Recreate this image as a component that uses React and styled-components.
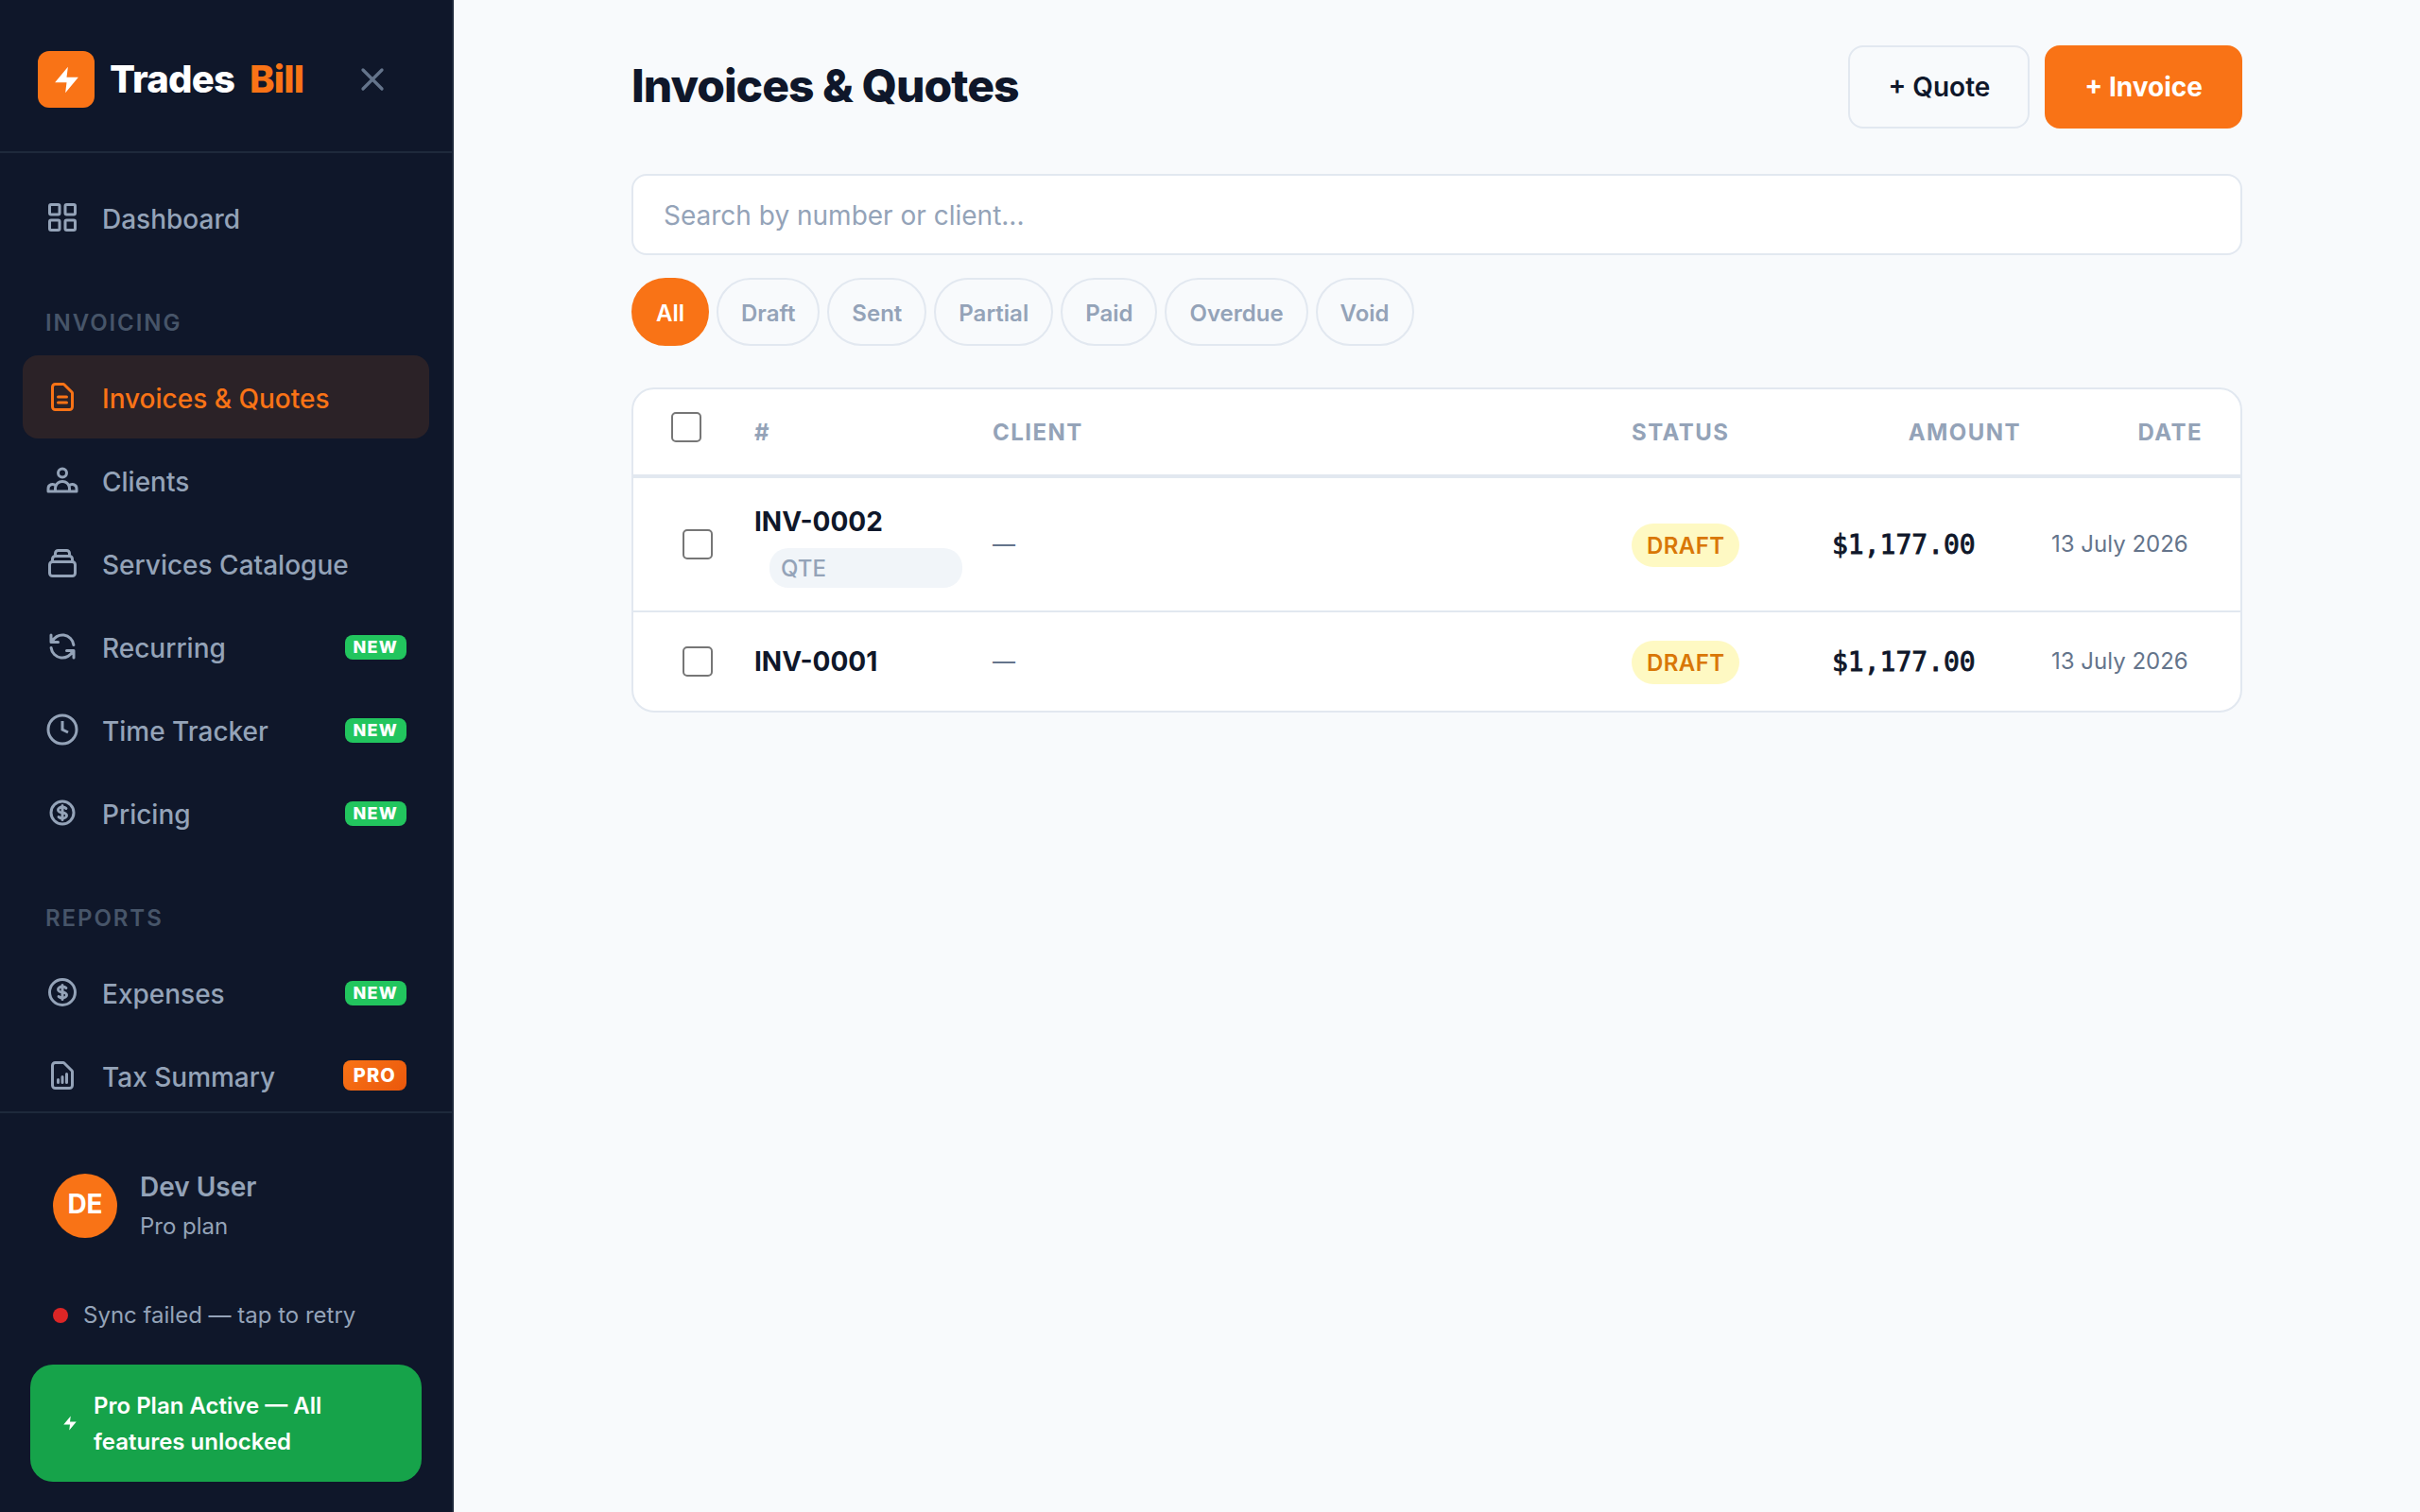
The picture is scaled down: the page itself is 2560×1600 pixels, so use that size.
import React from "react";
import styled, { createGlobalStyle, css } from "styled-components";

const GlobalStyle = createGlobalStyle`
    * {
        box-sizing: border-box;
    }

    body {
        margin: 0;
        background: #f8fafc;
        color: #0f172a;
        font-family: Inter, "Liberation Sans", sans-serif;
        font-size: 28px;
        overflow: hidden;
    }
`

const Layout = styled.div`
    display: flex;
    height: 100vh;
`

/* ---------- sidebar ---------- */

const Sidebar = styled.aside`
    display: flex;
    flex-direction: column;
    flex: none;
    width: 480px;
    background: #0f172a;
    border-right: 2px solid #1e293b;
`

const Brand = styled.div`
    display: flex;
    align-items: center;
    height: 162px;
    padding: 8px 64px 0 40px;
    border-bottom: 2px solid #1e293b;
`

const LogoBox = styled.div`
    display: grid;
    place-items: center;
    width: 60px;
    height: 60px;
    border-radius: 12px;
    background: #f97316;
`

const BrandName = styled.div`
    display: flex;
    gap: 16px;
    margin-left: 16px;
    color: #fff;
    font-size: 40px;
    font-weight: 800;
    letter-spacing: -0.8px;
    line-height: 48px;

    span {
        color: #f97316;
    }
`

const CloseButton = styled.button`
    display: grid;
    place-items: center;
    width: 40px;
    height: 40px;
    margin-left: auto;
    padding: 0;
    border: 0;
    background: none;
    color: #64748b;
`

const Nav = styled.nav`
    flex: 1;
    min-height: 0;
    padding: 24px 24px 0;
    overflow: hidden;
`

const NavLabel = styled.div`
    height: 102px;
    padding: 53px 24px 0;
    color: #475569;
    font-size: 24px;
    font-weight: 600;
    letter-spacing: 1.92px;
    line-height: 29px;
`

const NavItem = styled.a`
    display: flex;
    align-items: center;
    gap: 24px;
    height: 88px;
    padding: 0 24px;
    border-radius: 16px;
    color: #94a3b8;
    font-weight: 500;

    ${({ $active }) => $active && css`
        background: rgba(249, 115, 22, 0.12);
        color: #f97316;
    `}
`

const NavText = styled.span`
    flex: 1;
    padding-top: 3px;
    line-height: 34px;
    white-space: nowrap;
`

const Tag = styled.span`
    margin-top: 2px;
    padding: 0 9px;
    border-radius: 8px;
    background: #22c55e;
    color: #fff;
    font-size: 18px;
    font-weight: 800;
    letter-spacing: 1.2px;
    line-height: 26px;

    ${({ $pro }) => $pro && css`
        margin-top: 0;
        padding: 0 11px;
        background: linear-gradient(135deg, #f97316, #ea580c);
        font-size: 20px;
        line-height: 32px;
    `}
`

const SidebarFooter = styled.div`
    height: 424px;
    padding: 32px;
    border-top: 2px solid #1e293b;
`

const User = styled.div`
    display: flex;
    align-items: center;
    gap: 24px;
    height: 132px;
    padding: 0 24px;
`

const Avatar = styled.div`
    width: 68px;
    height: 68px;
    border-radius: 50%;
    background: #f97316;
    color: #fff;
    font-weight: 700;
    line-height: 64px;
    text-align: center;
`

const UserName = styled.div`
    color: #94a3b8;
    font-weight: 600;
    line-height: 42px;
`

const UserPlan = styled.div`
    color: #94a3b8;
    font-size: 24px;
    line-height: 41px;
`

const Sync = styled.div`
    display: flex;
    align-items: center;
    gap: 16px;
    height: 100px;
    margin-bottom: 2px;
    padding: 0 24px;
    color: #94a3b8;
    font-size: 24px;
    line-height: 30px;

    &::before {
        content: "";
        width: 16px;
        height: 16px;
        border-radius: 50%;
        background: #dc2626;
    }
`

const PlanBanner = styled.div`
    display: flex;
    align-items: center;
    gap: 16px;
    height: 124px;
    padding: 0 33px;
    border-radius: 24px;
    background: #16a34a;
    color: #fff;
    font-size: 24px;
    font-weight: 600;
    line-height: 38px;
`

const PlanText = styled.div`
    padding-top: 2px;
`

/* ---------- main area ---------- */

const Main = styled.main`
    flex: 1;
    padding: 48px 188px;
`

const PageHead = styled.header`
    display: flex;
    align-items: center;
    gap: 16px;
    height: 88px;
    margin-bottom: 48px;
`

const Title = styled.h1`
    flex: 1;
    margin: 0;
    padding-bottom: 2px;
    font-size: 48px;
    font-weight: 800;
    letter-spacing: -0.96px;
    line-height: 58px;
`

const Button = styled.button`
    height: 88px;
    padding: 0 40px;
    border: 2px solid #e2e8f0;
    border-radius: 16px;
    background: transparent;
    color: #0f172a;
    font: 600 28px Inter, sans-serif;

    ${({ $primary }) => $primary && css`
        border-color: #f97316;
        background: #f97316;
        color: #fff;
        font-weight: 700;
    `}
`

const Search = styled.input`
    display: block;
    width: 100%;
    height: 86px;
    margin-bottom: 24px;
    padding: 2px 32px 0;
    border: 2px solid #e2e8f0;
    border-radius: 16px;
    background: #fff;
    font: 400 28px Inter, sans-serif;

    &::placeholder {
        color: #94a3b8;
        opacity: 1;
    }
`

const Filters = styled.div`
    display: flex;
    gap: 8px;
    margin-bottom: 44px;
`

const Chip = styled.button`
    height: 72px;
    padding: 2px 24px 0;
    border: 2px solid #e2e8f0;
    border-radius: 40px;
    background: transparent;
    color: #94a3b8;
    font: 600 24px Inter, sans-serif;

    ${({ $active }) => $active && css`
        border-color: #f97316;
        background: #f97316;
        color: #fff;
    `}
`

const Card = styled.section`
    border: 2px solid #e2e8f0;
    border-radius: 24px;
    background: #fff;
    overflow: hidden;
`

const Row = styled.div`
    display: grid;
    grid-template-columns: 88px 252px 1fr 212px 200px 192px;
    align-items: center;
    height: ${({ $height }) => $height}px;
    padding: 0 40px;
    border-top: 2px solid #e2e8f0;
`

const HeadRow = styled(Row)`
    border-top: 0;
    border-bottom: 2px solid #e2e8f0;
    color: #94a3b8;
    font-size: 24px;
    font-weight: 700;
    letter-spacing: 1.44px;
`

const Cell = styled.div`
    text-align: ${({ $align }) => $align || "left"};
`

const Checkbox = styled.span`
    display: block;
    width: 32px;
    height: 32px;
    margin: ${({ $head }) => $head ? "0 0 10px" : "0 0 0 12px"};
    border: 2px solid #767676;
    border-radius: 5px;
`

const Number = styled.div`
    font-weight: 700;
    line-height: 44px;
`

const QuoteTag = styled.div`
    height: 42px;
    margin: 6px 32px 0 16px;
    padding: 0 12px;
    border-radius: 20px;
    background: #f1f5f9;
    color: #94a3b8;
    font-size: 24px;
    font-weight: 500;
    line-height: 43px;
`

const Client = styled.div`
    padding-bottom: 1px;
    color: #64748b;
    font-size: 24px;
`

const Status = styled.span`
    justify-self: start;
    height: 46px;
    margin-top: 2px;
    padding: 0 16px;
    border-radius: 24px;
    background: #fef9c3;
    color: #d97706;
    font-size: 24px;
    font-weight: 600;
    letter-spacing: 0.4px;
    line-height: 47px;
`

const Amount = styled.div`
    color: #0f172a;
    font: 400 28px "DejaVu Sans Mono", monospace;
    -webkit-text-stroke: 0.9px #0f172a;
`

const Day = styled.div`
    padding: 0 0 2px 32px;
    color: #64748b;
    font-size: 24px;
`

/* ---------- icons ---------- */

const IconSvg = styled.svg`
    flex: none;
    width: ${({ $size }) => $size || 36}px;
    height: ${({ $size }) => $size || 36}px;
    fill: none;
    stroke: currentColor;
    stroke-width: 2;
    stroke-linecap: ${({ $sharp }) => $sharp ? "butt" : "round"};
    stroke-linejoin: ${({ $sharp }) => $sharp ? "miter" : "round"};
`

const BoltSvg = styled.svg`
    flex: none;
    fill: #fff;
`

const DOLLAR = "M12 8c-1.657 0-3 .895-3 2s1.343 2 3 2 3 .895 3 2-1.343 2-3 2m0-8c1.11 0 2.08.402 2.599 1M12 8V7m0 1v8m0 0v1m0-1c-1.11 0-2.08-.402-2.599-1"
const PAGE = "m2 5H7a2 2 0 01-2-2V5a2 2 0 012-2h5.586a1 1 0 01.707.293l5.414 5.414a1 1 0 01.293.707V19a2 2 0 01-2 2z"

const icons = {
    dashboard: "M4 3h5a1 1 0 011 1v5a1 1 0 01-1 1H4a1 1 0 01-1-1V4a1 1 0 011-1zM15 3h5a1 1 0 011 1v5a1 1 0 01-1 1h-5a1 1 0 01-1-1V4a1 1 0 011-1zM4 14h5a1 1 0 011 1v5a1 1 0 01-1 1H4a1 1 0 01-1-1v-5a1 1 0 011-1zM15 14h5a1 1 0 011 1v5a1 1 0 01-1 1h-5a1 1 0 01-1-1v-5a1 1 0 011-1z",
    invoices: "M9 12h6m-6 4h6" + PAGE,
    clients: "M17 20h5v-2a3 3 0 00-5.356-1.857M17 20H7m10 0v-2c0-.656-.126-1.283-.356-1.857M7 20H2v-2a3 3 0 015.356-1.857M7 20v-2c0-.656.126-1.283.356-1.857m0 0a5.002 5.002 0 019.288 0M15 7a3 3 0 11-6 0 3 3 0 016 0z",
    services: "M19 11H5m14 0a2 2 0 012 2v6a2 2 0 01-2 2H5a2 2 0 01-2-2v-6a2 2 0 012-2m14 0V9a2 2 0 00-2-2M5 11V9a2 2 0 012-2m0 0V5a2 2 0 012-2h6a2 2 0 012 2v2M7 7h10",
    recurring: "M4 4v5h.582m15.356 2A8.001 8.001 0 004.582 9m0 0H9m11 11v-5h-.581m0 0a8.003 8.003 0 01-15.357-2m15.357 2H15",
    time: "M12 6v6l4 2M22 12a10 10 0 11-20 0 10 10 0 0120 0z",
    pricing: DOLLAR + "M20 12a8 8 0 11-16 0 8 8 0 0116 0z",
    expenses: DOLLAR + "M21 12a9 9 0 11-18 0 9 9 0 0118 0z",
    tax: "M9 17v-2m3 2v-4m3 4v-6m2 10H7a2 2 0 01-2-2V5a2 2 0 012-2h5.586a1 1 0 01.707.293l5.414 5.414a1 1 0 01.293.707V19a2 2 0 01-2 2z",
    close: "M18 6L6 18M6 6l12 12",
}

const Icon = ({ name, size }) => <IconSvg viewBox="0 0 24 24" $size={size} $sharp={name === "time"}>
    <path d={icons[name]} />
</IconSvg>

const Bolt = ({ size }) => <BoltSvg width={size} height={size} viewBox="0 0 24 24">
    <path d="M13 2L3 14h9l-1 8 10-12h-9l1-8z" />
</BoltSvg>

const invoicing = [
    { icon: "invoices", text: "Invoices & Quotes", active: true },
    { icon: "clients", text: "Clients" },
    { icon: "services", text: "Services Catalogue" },
    { icon: "recurring", text: "Recurring", tag: "NEW" },
    { icon: "time", text: "Time Tracker", tag: "NEW" },
    { icon: "pricing", text: "Pricing", tag: "NEW" },
]

const reports = [
    { icon: "expenses", text: "Expenses", tag: "NEW" },
    { icon: "tax", text: "Tax Summary", tag: "PRO" },
]

const filters = ["All", "Draft", "Sent", "Partial", "Paid", "Overdue", "Void"]

const rows = [
    { number: "INV-0002", quote: true, height: 142 },
    { number: "INV-0001", height: 106 },
]

const renderItem = ({ icon, text, tag, active }) => <NavItem key={text} $active={active}>
    <Icon name={icon} />
    <NavText>{text}</NavText>
    {tag && <Tag $pro={tag === "PRO"}>{tag}</Tag>}
</NavItem>

export default function App() {
    return <Layout>
        <GlobalStyle />
        <Sidebar>
            <Brand>
                <LogoBox><Bolt size={33} /></LogoBox>
                <BrandName>Trades<span>Bill</span></BrandName>
                <CloseButton aria-label="Close menu"><Icon name="close" size={40} /></CloseButton>
            </Brand>
            <Nav>
                {renderItem({ icon: "dashboard", text: "Dashboard" })}
                <NavLabel>INVOICING</NavLabel>
                {invoicing.map(renderItem)}
                <NavLabel>REPORTS</NavLabel>
                {reports.map(renderItem)}
            </Nav>
            <SidebarFooter>
                <User>
                    <Avatar>DE</Avatar>
                    <div>
                        <UserName>Dev User</UserName>
                        <UserPlan>Pro plan</UserPlan>
                    </div>
                </User>
                <Sync>Sync failed — tap to retry</Sync>
                <PlanBanner>
                    <Bolt size={18} />
                    <PlanText>Pro Plan Active — All features unlocked</PlanText>
                </PlanBanner>
            </SidebarFooter>
        </Sidebar>
        <Main>
            <PageHead>
                <Title>Invoices & Quotes</Title>
                <Button>+ Quote</Button>
                <Button $primary>+ Invoice</Button>
            </PageHead>
            <Search placeholder="Search by number or client..." />
            <Filters>
                {filters.map(f => <Chip key={f} $active={f === "All"}>{f}</Chip>)}
            </Filters>
            <Card>
                <HeadRow $height={92}>
                    <Checkbox $head />
                    <Cell>#</Cell>
                    <Cell>CLIENT</Cell>
                    <Cell>STATUS</Cell>
                    <Cell $align="right">AMOUNT</Cell>
                    <Cell $align="right">DATE</Cell>
                </HeadRow>
                {rows.map(r => <Row key={r.number} $height={r.height}>
                    <Checkbox />
                    <div>
                        <Number>{r.number}</Number>
                        {r.quote && <QuoteTag>QTE</QuoteTag>}
                    </div>
                    <Client>—</Client>
                    <Status>DRAFT</Status>
                    <Amount>$1,177.00</Amount>
                    <Day>13 July 2026</Day>
                </Row>)}
            </Card>
        </Main>
    </Layout>
}
